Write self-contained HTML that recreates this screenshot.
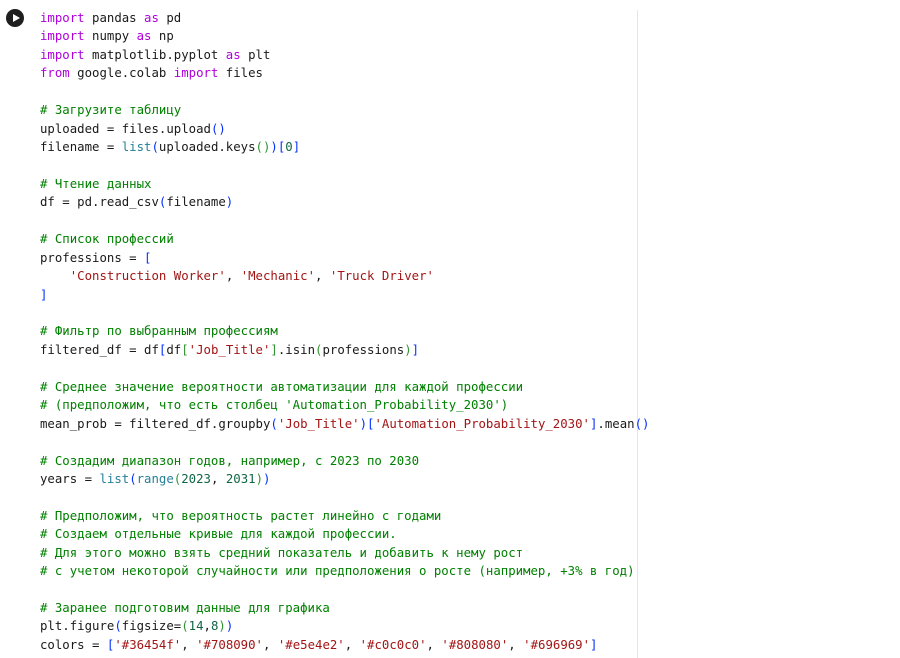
<!DOCTYPE html>
<html><head><meta charset="utf-8"><style>
body{margin:0;width:900px;height:658px;background:#fff;overflow:hidden;position:relative}
pre{position:absolute;left:40px;top:9px;margin:0;font-family:"DejaVu Sans Mono","Liberation Mono",monospace;font-size:12.35px;line-height:18.44px;color:#1a1a1a}
.k{color:#af00db}.c{color:#008000}.s{color:#a31515}.b{color:#267f99}.n{color:#116644}
.p1{color:#0431fa}.p2{color:#319331}.p3{color:#7b3814}
.div{position:absolute;left:637px;top:10px;width:1px;height:648px;background:#e6e6e6}
.run{position:absolute;left:6px;top:9px;width:18px;height:18px;border-radius:50%;background:#1f1f1f}
.run:after{content:"";position:absolute;left:6.5px;top:5px;border-left:7px solid #fff;border-top:4px solid transparent;border-bottom:4px solid transparent}
</style></head><body>
<div class="run"></div>
<div class="div"></div>
<pre><span class="k">import</span> pandas <span class="k">as</span> pd
<span class="k">import</span> numpy <span class="k">as</span> np
<span class="k">import</span> matplotlib.pyplot <span class="k">as</span> plt
<span class="k">from</span> google.colab <span class="k">import</span> files

<span class="c"># Загрузите таблицу</span>
uploaded = files.upload<span class="p1">()</span>
filename = <span class="b">list</span><span class="p1">(</span>uploaded.keys<span class="p2">()</span><span class="p1">)[</span><span class="n">0</span><span class="p1">]</span>

<span class="c"># Чтение данных</span>
df = pd.read_csv<span class="p1">(</span>filename<span class="p1">)</span>

<span class="c"># Список профессий</span>
professions = <span class="p1">[</span>
    <span class="s">'Construction Worker'</span>, <span class="s">'Mechanic'</span>, <span class="s">'Truck Driver'</span>
<span class="p1">]</span>

<span class="c"># Фильтр по выбранным профессиям</span>
filtered_df = df<span class="p1">[</span>df<span class="p2">[</span><span class="s">'Job_Title'</span><span class="p2">]</span>.isin<span class="p2">(</span>professions<span class="p2">)</span><span class="p1">]</span>

<span class="c"># Среднее значение вероятности автоматизации для каждой профессии</span>
<span class="c"># (предположим, что есть столбец 'Automation_Probability_2030')</span>
mean_prob = filtered_df.groupby<span class="p1">(</span><span class="s">'Job_Title'</span><span class="p1">)[</span><span class="s">'Automation_Probability_2030'</span><span class="p1">]</span>.mean<span class="p1">()</span>

<span class="c"># Создадим диапазон годов, например, с 2023 по 2030</span>
years = <span class="b">list</span><span class="p1">(</span><span class="b">range</span><span class="p2">(</span><span class="n">2023</span>, <span class="n">2031</span><span class="p2">)</span><span class="p1">)</span>

<span class="c"># Предположим, что вероятность растет линейно с годами</span>
<span class="c"># Создаем отдельные кривые для каждой профессии.</span>
<span class="c"># Для этого можно взять средний показатель и добавить к нему рост</span>
<span class="c"># с учетом некоторой случайности или предположения о росте (например, +3% в год)</span>

<span class="c"># Заранее подготовим данные для графика</span>
plt.figure<span class="p1">(</span>figsize=<span class="p2">(</span><span class="n">14</span>,<span class="n">8</span><span class="p2">)</span><span class="p1">)</span>
colors = <span class="p1">[</span><span class="s">'#36454f'</span>, <span class="s">'#708090'</span>, <span class="s">'#e5e4e2'</span>, <span class="s">'#c0c0c0'</span>, <span class="s">'#808080'</span>, <span class="s">'#696969'</span><span class="p1">]</span></pre>
</body></html>
